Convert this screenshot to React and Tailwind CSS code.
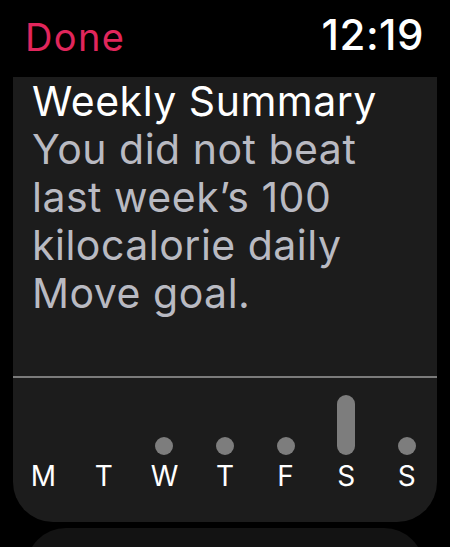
import React from "react";

const days = [
  { l: "M", v: 0 },
  { l: "T", v: 0 },
  { l: "W", v: 18 },
  { l: "T", v: 18 },
  { l: "F", v: 18 },
  { l: "S", v: 60 },
  { l: "S", v: 18 },
];

export default function App() {
  return (
    <div
      className="w-[450px] h-[547px] bg-black overflow-hidden flex flex-col"
      style={{ fontFamily: "Inter, 'Noto Sans', sans-serif" }}
    >
      <div className="shrink-0 flex justify-between items-end h-[77px] pl-[25px] pr-[26px] pb-[21px]">
        <span className="text-[38px] leading-none text-[#e1265c] tracking-[1.4px]">Done</span>
        <span className="text-[42px] leading-none text-white font-medium tracking-[0.5px]">12:19</span>
      </div>
      <div className="shrink-0 mx-[13px] h-[445px] bg-[#1c1c1c] rounded-b-[40px] flex flex-col">
        <div className="pl-[19px] text-[41px] leading-[48px] tracking-[0.5px]">
          <div className="text-white">Weekly Summary</div>
          <div className="text-[#b9bac2]">
            You did not beat
            <br />
            last week’s 100
            <br />
            kilocalorie daily
            <br />
            Move goal.
          </div>
        </div>
        <div className="mt-[59px] h-[2px] bg-[#7b7b7b]" />
        <div className="grid grid-cols-7 pt-[16px]">
          {days.map((d, i) => (
            <div key={i} className="flex flex-col items-center">
              <div className="h-[61px] flex items-end">
                {d.v > 0 && (
                  <div
                    className="w-[18px] rounded-full bg-[#7d7d7d]"
                    style={{ height: d.v }}
                  />
                )}
              </div>
              <div className="mt-[7px] text-[28px] leading-[28px] text-white">{d.l}</div>
            </div>
          ))}
        </div>
      </div>
      <div className="shrink-0 mx-[26px] mt-[6px] h-[60px] bg-[#131313] rounded-t-[40px]" />
    </div>
  );
}
